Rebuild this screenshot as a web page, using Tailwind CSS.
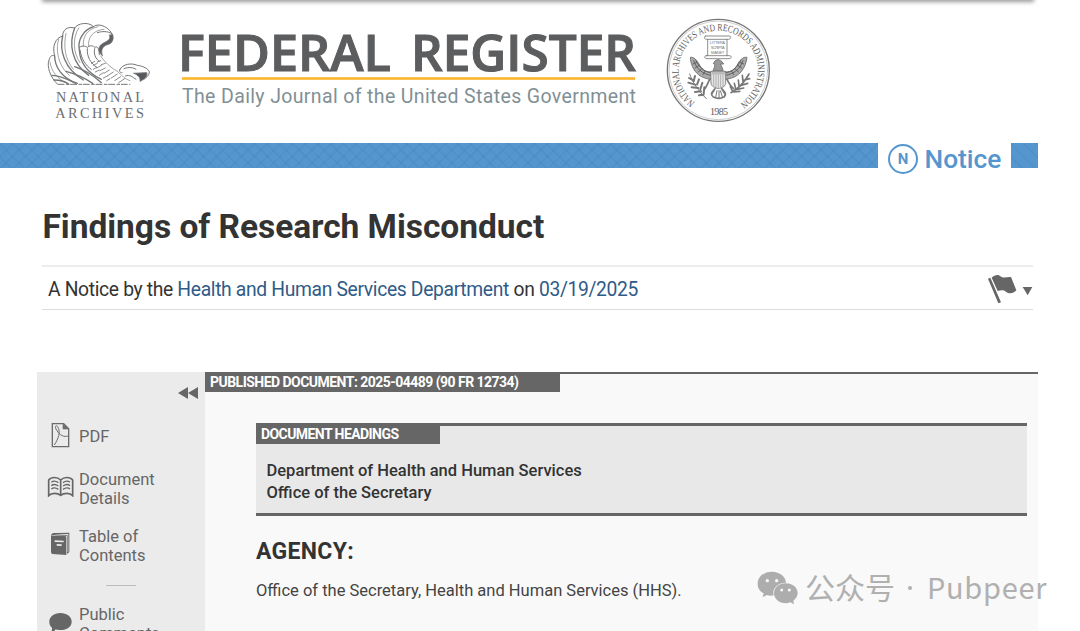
<!DOCTYPE html>
<html lang="en">
  <head>
    <meta charset="UTF-8" />
    <meta name="viewport" content="width=device-width, initial-scale=1" />
    <title>Federal Register</title>
    <script src="https://cdn.jsdelivr.net/npm/@tailwindcss/browser@4"></script>
  </head>

  <body class="relative h-[631px] w-[1080px] overflow-hidden bg-white font-['Roboto',sans-serif] text-[#333]">
    <!-- Bottom edge of the nav bar -->
    <div class="absolute -top-[10px] left-[43px] h-[10px] w-[990px] bg-white shadow-[0_1px_4px_1px_rgba(0,0,0,0.4)]"></div>

    <!-- Header -->
    <header class="flex h-[143px] items-start pl-[30px]">
      <svg class="h-[130px] w-[140px] shrink-0" viewBox="0 0 420 390" fill="none" stroke="#737577" stroke-width="3" stroke-linecap="round">
        <path d="M82 252C60 232 50 198 57 180C60 168 66 164 74 168C66 138 76 114 98 108C98 90 112 78 134 84C142 70 176 64 190 80C210 66 240 84 248 106" />
        <path d="M74 168C74 200 96 236 142 250M98 108C88 150 102 206 160 240M134 84C116 130 124 190 176 226M190 80C160 90 142 120 148 150C150 190 176 220 214 238" stroke-width="4" />
        <path d="M60 186C64 214 80 236 112 250M86 118C76 150 84 196 118 226M108 100C100 140 104 176 130 208M146 84C126 116 130 160 150 188M204 80C170 88 158 110 160 138M222 88C190 90 172 112 176 140" stroke-width="2" />
        <path d="M202 98C220 92 240 94 248 104" stroke-width="3" />
        <path d="M248 104C254 120 244 132 232 134C216 140 212 152 218 168C200 154 204 136 222 128C236 122 242 116 238 106Z" fill="#5f6163" stroke-width="2" />
        <path d="M148 142C160 134 168 140 172 142C182 134 190 138 194 142C204 136 208 150 208 164M150 150C154 176 166 196 184 208M172 146C170 170 182 190 200 202M194 146C190 160 196 176 208 184" />
        <path d="M66 226C88 226 118 240 138 250M72 240C92 240 104 244 116 252M108 214C138 222 168 236 188 250M134 200C164 210 190 226 214 248" stroke-width="4" />
        <path d="M212 168C222 184 240 202 262 214C276 226 282 236 300 242" stroke-width="2" />
        <path d="M184 190L194 184M190 196L202 190M200 204L214 196M210 212L226 204M222 220L238 210M232 228L250 216M244 234L262 222M254 242L272 230M266 248L284 236M190 208L200 202M196 216L208 210M208 226L220 218M220 234L232 228M230 242L240 236M202 186L212 182M214 194L226 190" stroke-width="2.5" />
        <path d="M84 253H300" stroke-dasharray="18 7 8 5" stroke-width="3" />
        <path d="M270 208C278 192 304 188 322 196C338 198 356 206 358 216C358 226 350 232 342 238M270 208C266 214 270 218 276 218M282 206C296 200 310 202 318 208M286 228C300 222 308 232 318 238" stroke-width="3" />
        <path d="M312 220L350 218C354 226 344 238 330 244C332 234 326 226 312 220Z" fill="#55575a" />
        <g fill="#6c6e70" stroke="none" font-family="'Liberation Serif', serif" font-size="43">
          <text x="78" y="306" textLength="264">NATIONAL</text>
          <text x="76" y="353" textLength="266">ARCHIVES</text>
        </g>
      </svg>

      <svg class="h-[130px] w-[480px] shrink-0" viewBox="0 0 480 130">
        <g fill="#5c5d5f" stroke="#5c5d5f" stroke-width="1.1" font-family="'Open Sans', 'Noto Sans', sans-serif" font-weight="600" font-size="51">
          <text x="8" y="70.5" textLength="213" lengthAdjust="spacingAndGlyphs">FEDERAL</text>
          <text x="241" y="70.5" textLength="225" lengthAdjust="spacingAndGlyphs">REGISTER</text>
        </g>
        <rect x="12" y="77.2" width="453" height="2.6" fill="#fdb52b" />
        <text x="12" y="103" fill="#7f9095" font-family="'Roboto', sans-serif" font-size="19.5" textLength="454">The Daily Journal of the United States Government</text>
      </svg>

      <svg class="mt-[10px] ml-[5px] h-[120px] w-[130px] shrink-0" viewBox="0 0 390 360" fill="none" stroke="#777" stroke-linecap="round">
        <defs>
          <path id="ring" d="M120 277A119 119 0 1 1 260 277" />
        </defs>
        <circle cx="190" cy="181" r="153" stroke-width="4" />
        <circle cx="190" cy="181" r="148" stroke-width="1.5" stroke="#999" />
        <g fill="#5c5c5c" stroke="none" font-family="'Liberation Serif', serif">
          <text font-size="30"><textPath href="#ring" textLength="604" lengthAdjust="spacingAndGlyphs">NATIONAL ARCHIVES AND RECORDS ADMINISTRATION</textPath></text>
          <text x="165" y="314" font-size="30" textLength="54">1985</text>
          <g font-size="12" fill="#777" font-family="'Liberation Sans', sans-serif">
            <text x="164" y="103" textLength="46">LITTERA</text>
            <text x="167" y="118" textLength="42">SCRIPTA</text>
            <text x="168" y="133" textLength="40">MANET</text>
          </g>
        </g>
        <path d="M152 78H222C230 78 228 88 220 88H154C148 88 146 78 152 78ZM158 88V137M216 88V137M154 137H222C232 137 230 146 222 146H156C148 146 146 137 154 137Z" stroke-width="2.5" />
        <!-- eagle -->
        <path d="M174 184C158 190 144 182 134 166C126 150 116 140 106 142C108 172 124 204 168 208ZM206 184C222 190 236 182 246 166C254 150 264 140 276 142C272 172 256 204 212 208Z" fill="#aaa" stroke-width="3" />
        <path d="M116 152C124 176 142 192 168 196M122 150C132 172 148 186 168 188M264 152C256 176 238 192 212 196M258 150C248 172 232 186 212 188M114 162L124 158M120 174L132 166M130 186L140 176M144 194L150 184M266 162L256 158M260 174L248 166M250 186L240 176M236 194L230 184" stroke-width="2.5" stroke="#555" />
        <path d="M176 160C178 148 192 146 200 154L206 162L196 162C200 170 204 176 204 182H174C176 174 184 168 176 160Z" fill="#999" stroke-width="3" />
        <path d="M168 184H212V220C212 230 198 234 190 236C182 234 168 230 168 220Z" fill="#e4e4e4" stroke-width="2.5" />
        <path d="M176 196V228M183 196V231M190 196V233M197 196V231M204 196V228" stroke-width="2" stroke="#999" />
        <path d="M170 190H210" stroke-width="8" stroke="#bbb" stroke-linecap="butt" />
        <path d="M164 208C158 220 154 232 148 238M216 208C222 220 228 230 236 236M180 236C172 246 164 252 174 260C184 266 198 266 208 260C216 252 208 244 200 236" stroke-width="5" />
        <path d="M170 254L178 242M182 262L186 242M192 264V242M202 260L196 242M210 254L202 242" stroke-width="3" />
        <path d="M104 192C112 216 130 242 154 266" stroke-width="3" />
        <path d="M102 204L116 212M100 218L120 224M110 232L130 234M120 246L138 244M132 256L146 254M120 198L116 214M132 208L126 224M142 218L136 238M148 232L146 252" stroke-width="6" />
        <path d="M228 248C250 236 268 218 282 192M232 242L226 230M242 236L238 220M252 228L250 210M264 214L262 196M236 246L254 244M246 238L266 234M258 226L278 220M268 210L284 206" stroke-width="5" />
      </svg>
    </header>

    <!-- Document type bar -->
    <div class="flex h-[25px] w-[1038px]">
      <div class="w-[878px] shrink-0 bg-[#5596cf] bg-[repeating-linear-gradient(45deg,transparent_0_7px,rgba(50,110,170,0.12)_7px_9px),repeating-linear-gradient(-45deg,transparent_0_7px,rgba(50,110,170,0.12)_7px_9px)]"></div>
      <div class="flex h-[32px] w-[133px] shrink-0 items-center pl-[10px] text-[#5596cf]">
        <span class="flex size-[30px] items-center justify-center rounded-full border-2 border-[#5596cf] text-[15px] font-bold">N</span>
        <span class="mt-[2px] ml-[6.5px] text-[26.3px] font-medium">Notice</span>
      </div>
      <div class="grow bg-[#5596cf] bg-[repeating-linear-gradient(45deg,transparent_0_7px,rgba(50,110,170,0.12)_7px_9px)]"></div>
    </div>

    <!-- Title -->
    <h1 class="mt-[37px] ml-[42.5px] text-[33.5px] leading-[44px] font-bold tracking-[-0.03px]">Findings of Research Misconduct</h1>
    <div class="mt-[16px] ml-[42px] flex h-[45px] w-[991px] items-center justify-between border-t-2 border-b border-t-[#ececec] border-b-[#dcdcdc] pl-[6px]">
      <p class="mt-[4px] text-[19.3px] tracking-[-0.34px]">A Notice by the <a class="text-[#2f5b88]">Health and Human Services Department</a> on <a class="text-[#2f5b88]">03/19/2025</a></p>
      <svg class="mt-px h-[30px] w-[46px]" viewBox="81 57 138 90" fill="#666">
        <path d="M84 71L91 68L123 142L115 145Z" />
        <path d="M95 68C104 60 114 57 121 64C132 72 142 64 153 66L169 106C160 116 148 118 138 110C130 104 122 106 113 108Z" />
        <path d="M188 96H217L203 121Z" />
      </svg>
    </div>

    <!-- Document -->
    <main class="mt-[62px] ml-[37px] flex h-[260px] w-[1001px]">
      <aside class="w-[168px] shrink-0 bg-[#ebebeb] text-[16.5px] leading-[19px] text-[#666]">
        <svg class="mt-[15px] ml-[141px] h-[12px] w-[20px]" viewBox="0 0 20 12" fill="#666">
          <path d="M10 0V12L0 6ZM20 0V12L10 6Z" />
        </svg>
        <ul class="mt-[21px]">
          <li class="flex h-[30px] items-center">
            <svg class="ml-[14px] h-[26px] w-[20px]" viewBox="64 186 60 78" fill="none" stroke="#6c6c6c" stroke-width="4">
              <path d="M68 191H102L117 206V260H68Z" />
              <path d="M100 191V207H117Z" fill="#6c6c6c" stroke-width="2" />
              <path d="M74 255C86 236 94 216 84 200C78 192 74 202 82 212C90 226 104 232 115 228" stroke-width="3" />
            </svg>
            <span class="mt-[3px] ml-[8px]">PDF</span>
          </li>
          <li class="mt-[20px] flex h-[38px] items-center">
            <svg class="mb-[5px] ml-[10px] h-[21px] w-[28px]" viewBox="51 348 84 63" fill="none" stroke="#666" stroke-width="5">
              <path d="M56 407V360C64 350 82 350 92 360C102 350 120 350 128 360V407C120 398 102 398 92 406C82 398 64 398 56 407ZM92 360V406" />
              <path d="M64 367C70 362 78 363 85 368M64 377C70 372 78 373 85 378M64 387C70 382 78 383 85 388M99 368C106 363 114 362 120 367M99 378C106 373 114 372 120 377M99 388C106 383 114 382 120 387" stroke-width="4" />
            </svg>
            <span class="ml-[4px]">Document<br />Details</span>
          </li>
          <li class="mt-[19px] flex h-[38px] items-center">
            <svg class="mb-[4px] ml-[13px] h-[24px] w-[20px]" viewBox="62 516 60 72" fill="#666">
              <path d="M65 530C65 520 70 519 78 519L120 518V576L113 582V528L66 526Z" />
              <path d="M117 522L72 524L115 526V577L117 575Z" fill="#ebebeb" />
              <path d="M65 526C68 528 72 528 78 528H107Q111 528 111 532V585L70 582Q65 582 65 576Z" />
              <path d="M76 541L103 542V547L76 546ZM82 552L97 553V558L82 557Z" fill="#ebebeb" />
            </svg>
            <span class="ml-[9px]">Table of<br />Contents</span>
          </li>
        </ul>
        <div class="mt-[20px] ml-[69px] h-px w-[30px] bg-[#bbb]"></div>
        <div class="mt-[19px] flex h-[38px]">
          <svg class="mt-[7px] ml-[12px] h-[24px] w-[23px]" viewBox="58 756 69 72" fill="#666">
            <path d="M92 759C112 759 126 770 126 785C126 800 112 810 92 810C86 810 82 810 78 808C74 814 68 818 62 820C66 814 68 808 67 803C61 798 59 792 59 785C59 770 73 759 92 759Z" />
          </svg>
          <span class="ml-[7px]">Public<br />Comments</span>
        </div>
      </aside>

      <section class="grow border-t-2 border-[#666] bg-[#f9f9f9]">
        <div class="-mt-[2px] h-[20px] w-[354.5px] bg-[#666] pl-[5px] text-[14px] leading-[21px] font-bold tracking-[-0.53px] text-white">PUBLISHED DOCUMENT: 2025-04489 (90 FR 12734)</div>
        <div class="mt-[31px] ml-[51px] h-[93px] w-[771px] border-t-3 border-b-3 border-[#666] bg-[#e8e8e8]">
          <div class="-mt-[3px] h-[21px] w-[184px] bg-[#666] pl-[5px] text-[14px] leading-[22px] font-bold tracking-[-0.57px] text-white">DOCUMENT HEADINGS</div>
          <p class="mt-[16px] ml-[10.5px] text-[16.5px] leading-[21.5px] font-medium">Department of Health and Human Services<br />Office of the Secretary</p>
        </div>
        <h2 class="mt-[21px] ml-[51px] text-[23px] leading-[30px] font-bold tracking-[0.3px]">AGENCY:</h2>
        <p class="mt-[13px] ml-[51px] text-[16.5px] leading-[22px] text-[#444]">Office of the Secretary, Health and Human Services (HHS).</p>
      </section>
    </main>

    <!-- Channel mark over the page -->
    <div class="absolute top-[567px] left-[757px] flex h-[42px] items-center text-[#b0b0b0]">
      <svg class="h-[34px] w-[42px]" viewBox="51 31 126 102" fill="#adadad">
        <path d="M96 33C120 33 137 48 138 66C116 66 100 80 100 96L101 104C94 106 86 105 80 103L68 110L71 98C60 92 53 83 53 70C53 48 72 33 96 33Z" />
        <path d="M137 68C158 68 173 81 173 97C173 107 168 114 160 120L162 131L151 125C146 127 142 128 137 128C117 128 102 114 102 98C102 81 117 68 137 68Z" />
        <g fill="#f9f9f9"><circle cx="82" cy="60" r="5" /><circle cx="110" cy="60" r="5" /><circle cx="125" cy="88" r="4.500" /><circle cx="148" cy="88" r="4.500" /></g>
      </svg>
      <span class="mb-[4px] ml-[6px] font-['Noto_Sans_CJK_SC',sans-serif] text-[30px]">公众号</span>
      <span class="ml-[13px] size-[4px] rounded-full bg-[#b0b0b0]"></span>
      <span class="mb-[2px] ml-[15px] font-['Noto_Sans_CJK_SC',sans-serif] text-[29px] tracking-[0.7px]">Pubpeer</span>
    </div>
  </body>
</html>
